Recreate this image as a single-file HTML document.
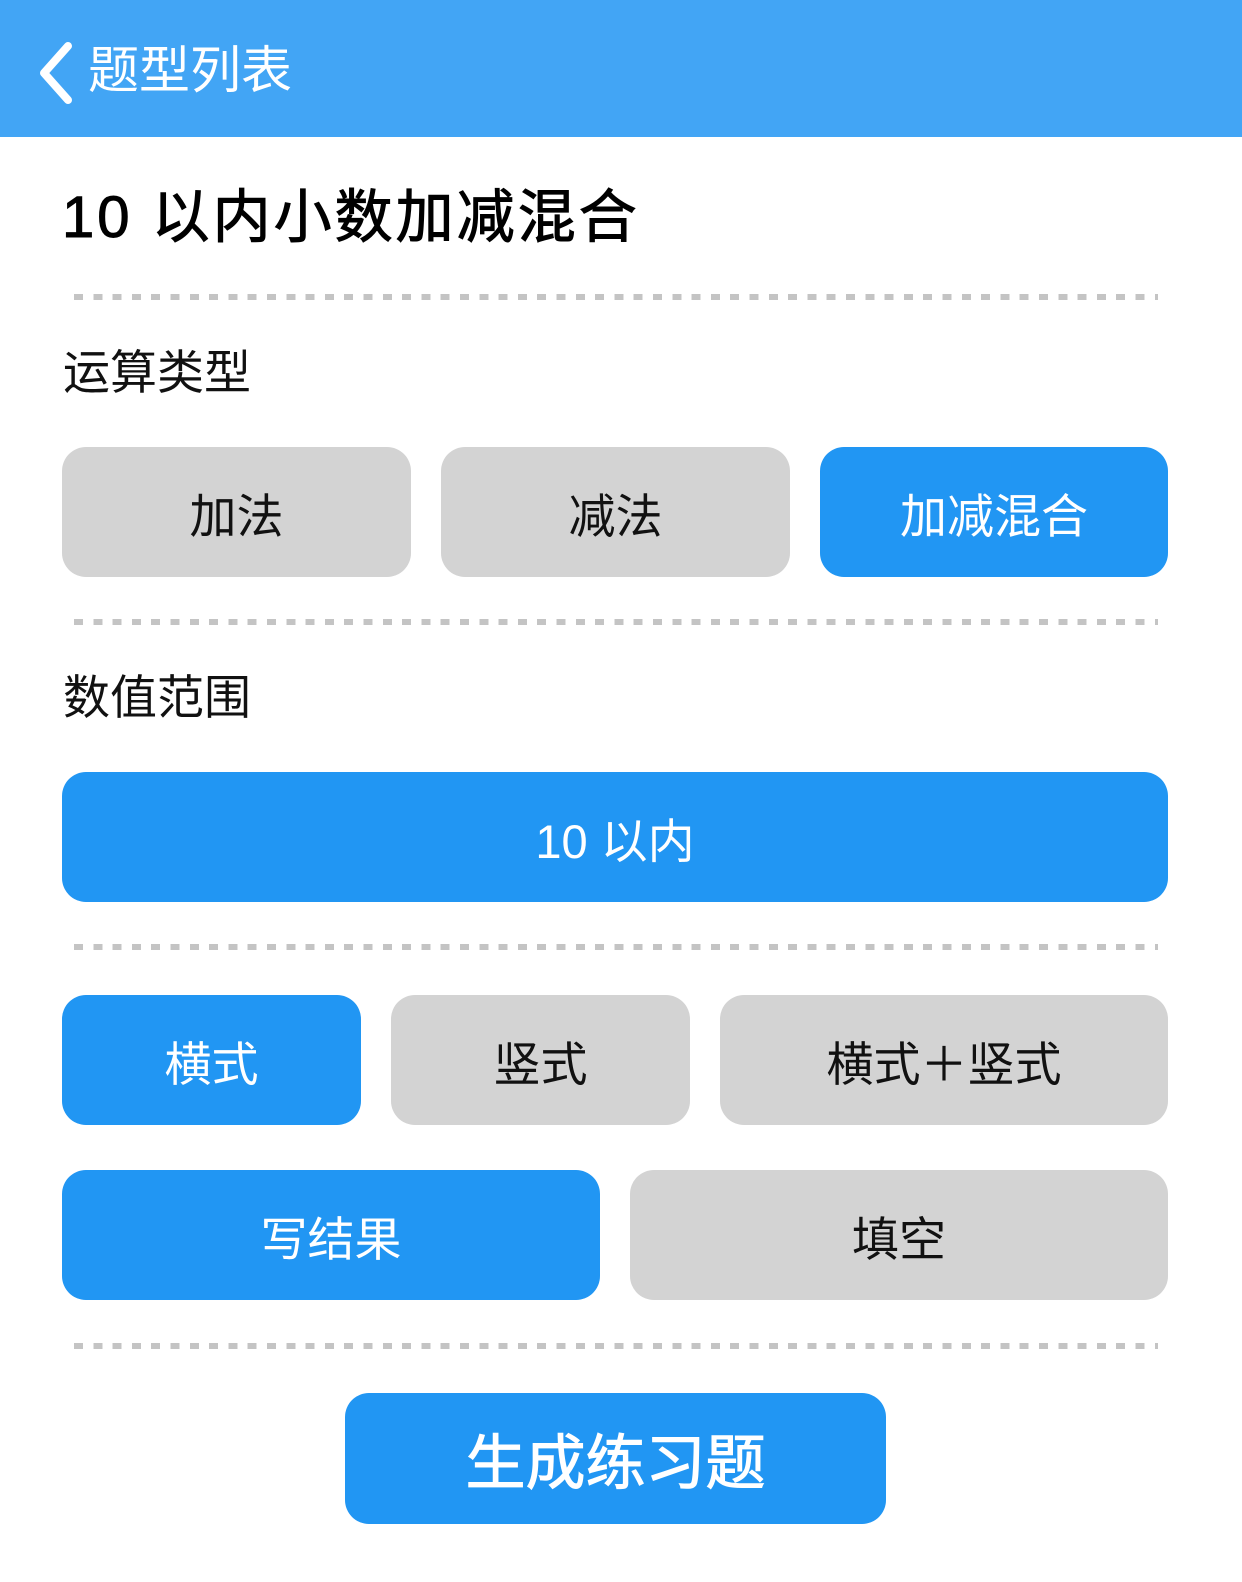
<!DOCTYPE html>
<html><head><meta charset="utf-8"><style>
*{margin:0;padding:0;box-sizing:border-box}
body{width:1242px;height:1582px;background:#fff;position:relative;overflow:hidden;font-family:"Liberation Sans","Noto Sans CJK SC",sans-serif}
.hdr{position:absolute;left:0;top:0;width:1242px;height:137px;background:#42a5f5}
.hdr span{position:absolute;left:88px;top:36px;font-size:51px;color:#fff;line-height:70px}
.t{position:absolute;left:62px;top:178px;font-size:58px;color:#000;line-height:80px;letter-spacing:3px;-webkit-text-stroke:1px #000}
.l{position:absolute;left:63px;font-size:47px;color:#111;line-height:62px}
.d{position:absolute;left:74px;width:1084px;height:6px;background:repeating-linear-gradient(90deg,#c4c4c4 0 9px,transparent 9px 19.3px)}
.b{position:absolute;height:130px;border-radius:24px;display:flex;align-items:center;justify-content:center;font-size:47px;color:#111;background:#d3d3d3}
.b.on{background:#2196f3;color:#fff}
</style></head><body>
<div class="hdr"><svg style="position:absolute;left:36px;top:40px" width="40" height="64" viewBox="0 0 40 64"><path d="M32 6 L8 33 L32 60" fill="none" stroke="#fff" stroke-width="8" stroke-linecap="round" stroke-linejoin="round"/></svg><span>题型列表</span></div>
<div class="t">10 以内小数加减混合</div>
<div class="d" style="top:294px"></div>
<div class="l" style="top:342px">运算类型</div>
<div class="b" style="left:62px;top:447px;width:349px">加法</div>
<div class="b" style="left:441px;top:447px;width:349px">减法</div>
<div class="b on" style="left:820px;top:447px;width:348px">加减混合</div>
<div class="d" style="top:619px"></div>
<div class="l" style="top:667px">数值范围</div>
<div class="b on" style="left:62px;top:772px;width:1106px">10 以内</div>
<div class="d" style="top:944px"></div>
<div class="b on" style="left:62px;top:995px;width:299px">横式</div>
<div class="b" style="left:391px;top:995px;width:299px">竖式</div>
<div class="b" style="left:720px;top:995px;width:448px">横式＋竖式</div>
<div class="b on" style="left:62px;top:1170px;width:538px">写结果</div>
<div class="b" style="left:630px;top:1170px;width:538px">填空</div>
<div class="d" style="top:1343px"></div>
<div class="b on" style="left:345px;top:1393px;width:541px;height:131px;font-size:60px;-webkit-text-stroke:1px #fff">生成练习题</div>
</body></html>
